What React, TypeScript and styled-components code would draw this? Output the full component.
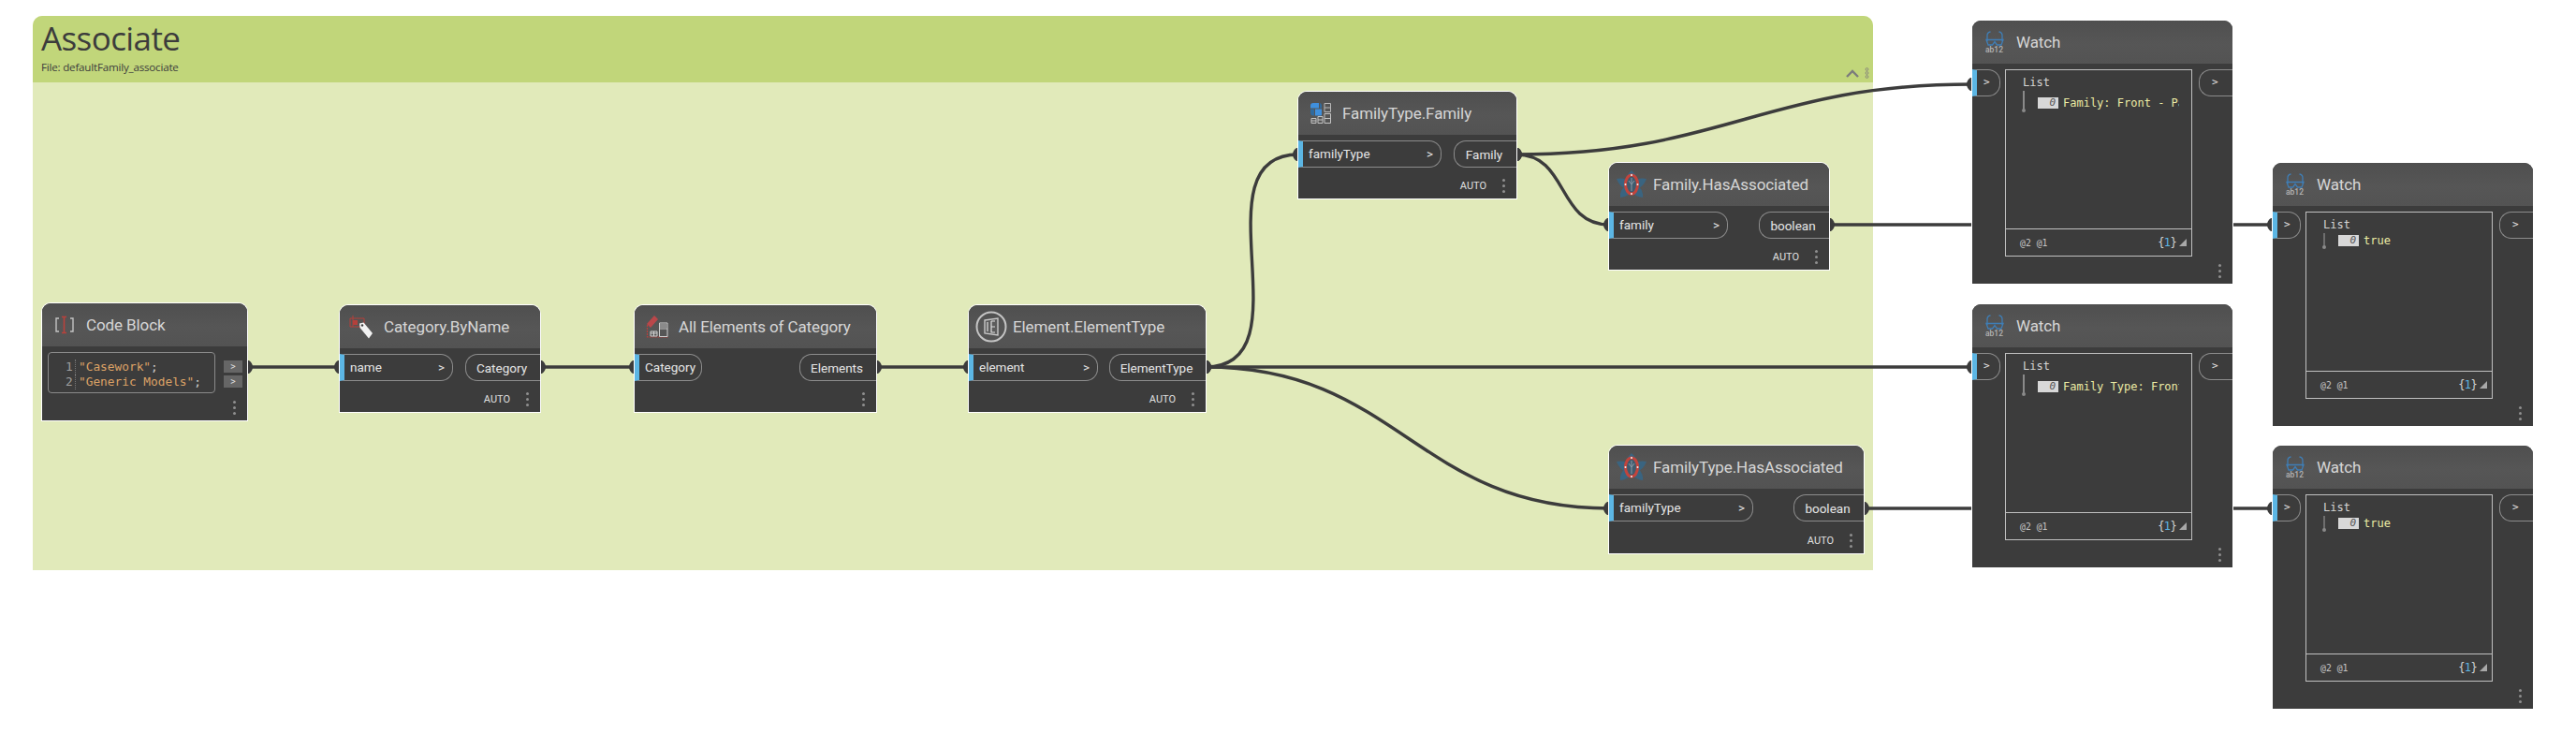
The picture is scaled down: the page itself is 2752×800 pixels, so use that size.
import React from 'react'
import styled, { createGlobalStyle } from 'styled-components'

const GlobalStyle = createGlobalStyle`
    html, body {
        margin: 0;
        background: #ffffff;
    }
    body {
        font-family: Roboto, "Liberation Sans", sans-serif;
    }
`

const Canvas = styled.div`
    position: relative;
    width: 2752px;
    height: 800px;
    overflow: hidden;
`

const Group = styled.div`
    position: absolute;
    left: 35px;
    top: 17px;
    width: 1966px;
    height: 592px;
    background: #e1eaba;
    border-radius: 10px 10px 0 0;
`
const GroupHeader = styled.div`
    position: relative;
    height: 71px;
    box-sizing: border-box;
    padding: 1px 9px 0;
    background: #c1d67a;
    border-radius: 10px 10px 0 0;
    color: #3c3c3c;
`
const GroupTitle = styled.div`
    font-family: "Open Sans", sans-serif;
    font-size: 35px;
    line-height: 46px;
    letter-spacing: -0.6px;
`
const GroupFile = styled.div`
    font-family: "Open Sans", sans-serif;
    font-size: 11.6px;
    line-height: 16px;
    letter-spacing: -0.2px;
`
const GroupControls = styled.div`
    position: absolute;
    right: 4px;
    bottom: 4px;
    display: flex;
    align-items: center;
    gap: 6px;
`

const WireLayer = styled.svg`
    position: absolute;
    left: 0;
    top: 0;
`

const Node = styled.div<{ $x: number; $y: number; $w: number; $h: number }>`
    position: absolute;
    left: ${p => p.$x}px;
    top: ${p => p.$y}px;
    width: ${p => p.$w}px;
    height: ${p => p.$h}px;
    display: flex;
    flex-direction: column;
    background: #3c3c3c;
    border-radius: 9px 9px 0 0;
    box-shadow: 0 0 0 1px #ffffff;
    color: #e6e6e6;
`
const NodeHeader = styled.div`
    flex: none;
    display: flex;
    align-items: center;
    height: 46px;
    background: linear-gradient(#4f4f4f, #565656 55%, #535353);
    border-radius: 9px 9px 0 0;
`
const IconSlot = styled.div`
    flex: none;
    width: 47px;
    height: 46px;
    display: flex;
    align-items: center;
    justify-content: center;
`
const NodeTitle = styled.div`
    font-size: 17px;
    letter-spacing: -0.1px;
    color: #d6d6d6;
    white-space: nowrap;
`
const PortRow = styled.div`
    flex: none;
    display: flex;
    justify-content: space-between;
    align-items: flex-start;
    margin-top: 6px;
`
const InPort = styled.div<{ $w: number }>`
    box-sizing: border-box;
    width: ${p => p.$w}px;
    height: 29px;
    display: flex;
    align-items: center;
    justify-content: space-between;
    padding: 0 8px 2px 6px;
    border: 1px solid #8c8c8c;
    border-left: 5px solid #5cb6e4;
    border-radius: 0 13px 13px 0;
    font-size: 13.5px;
    white-space: nowrap;
`
const OutPort = styled.div<{ $w: number }>`
    box-sizing: border-box;
    width: ${p => p.$w}px;
    height: 29px;
    display: flex;
    align-items: center;
    justify-content: center;
    padding-right: 3px;
    border: 1px solid #8c8c8c;
    border-right: none;
    border-radius: 13px 0 0 13px;
    font-size: 13.5px;
    white-space: nowrap;
`
const NodeFooter = styled.div`
    margin-top: auto;
    flex: none;
    height: 28px;
    display: flex;
    align-items: center;
    justify-content: flex-end;
    gap: 17px;
    padding-right: 12px;
`
const AutoLabel = styled.span`
    font-size: 11px;
    color: #e0e0e0;
`
const Dots = styled.div`
    width: 3px;
    height: 3px;
    border-radius: 50%;
    background: #8f8f8f;
    box-shadow: 0 -6px 0 #8f8f8f, 0 6px 0 #8f8f8f;
`

const CodeRow = styled.div`
    display: flex;
    align-items: flex-start;
    margin-top: 6px;
    padding-left: 6px;
`
const CodeBox = styled.div`
    box-sizing: border-box;
    width: 179px;
    height: 44px;
    padding: 7px 0 0 18px;
    border: 1px solid #8a8a8a;
    border-radius: 4px;
    font-family: "DejaVu Sans Mono", monospace;
    font-size: 12.8px;
    line-height: 16px;
`
const CodeLine = styled.div`
    display: flex;
`
const LineNumber = styled.span`
    width: 10px;
    margin-right: 3px;
    border-right: 1px dotted #777777;
    color: #a0a0a0;
`
const CodeString = styled.span`
    color: #dca266;
`
const CodeSemi = styled.span`
    color: #d0d0d0;
`
const CodeOutputs = styled.div`
    display: flex;
    flex-direction: column;
    gap: 3px;
    margin: 9px 0 0 9px;
`
const CodeOutput = styled.div`
    width: 20px;
    height: 13px;
    display: flex;
    align-items: center;
    justify-content: center;
    background: #666666;
    font-size: 11px;
    color: #dddddd;
`

const WatchRow = styled.div`
    display: flex;
    align-items: flex-start;
    margin-top: 6px;
`
const WatchIn = styled.div`
    box-sizing: border-box;
    flex: none;
    width: 30px;
    height: 29px;
    padding: 0 0 3px 7px;
    display: flex;
    align-items: center;
    border: 1px solid #8c8c8c;
    border-left: 5px solid #5cb6e4;
    border-radius: 0 13px 13px 0;
    font-family: "DejaVu Sans Mono", monospace;
    font-size: 11px;
`
const WatchOut = styled.div`
    box-sizing: border-box;
    flex: none;
    width: 36px;
    height: 29px;
    margin-left: 7px;
    padding: 0 0 3px 13px;
    display: flex;
    align-items: center;
    border: 1px solid #8c8c8c;
    border-right: none;
    border-radius: 13px 0 0 13px;
    font-family: "DejaVu Sans Mono", monospace;
    font-size: 11px;
`
const ListBox = styled.div`
    box-sizing: border-box;
    flex: none;
    width: 200px;
    height: 200px;
    margin-left: 5px;
    display: flex;
    flex-direction: column;
    border: 1px solid #c0c0c0;
    font-family: "DejaVu Sans Mono", monospace;
`
const ListBody = styled.div`
    flex: 1;
    padding: 6px 0 0 18px;
`
const ListLabel = styled.div`
    font-size: 12px;
    line-height: 14px;
    color: #d4d4d4;
`
const Tree = styled.div`
    display: flex;
    margin-top: 2px;
`
const Stem = styled.div<{ $tall: boolean }>`
    position: relative;
    flex: none;
    box-sizing: border-box;
    width: 2px;
    height: ${p => (p.$tall ? 21 : 15)}px;
    background: ${p => (p.$tall ? '#8a8a8a' : '#6e6e6e')};
    &:after {
        content: '';
        position: absolute;
        left: -1px;
        bottom: -2px;
        width: 4px;
        height: 4px;
        border-radius: 50%;
        background: #8a8a8a;
    }
`
const TreeItem = styled.div<{ $tall: boolean }>`
    display: flex;
    align-items: center;
    margin: ${p => (p.$tall ? 4 : 1)}px 0 0 14px;
`
const IndexBox = styled.div`
    flex: none;
    box-sizing: border-box;
    width: 22px;
    height: 12px;
    padding-right: 3px;
    background: #d8d8d8;
    color: #555555;
    font-size: 11px;
    line-height: 12px;
    font-style: italic;
    text-align: right;
`
const ValueText = styled.div`
    flex: none;
    width: 124px;
    margin-left: 5px;
    overflow: hidden;
    white-space: nowrap;
    font-size: 12px;
    line-height: 14px;
    color: #ebeba4;
`
const ListFooter = styled.div`
    flex: none;
    height: 29px;
    box-sizing: border-box;
    display: flex;
    align-items: center;
    justify-content: space-between;
    padding: 0 5px 0 15px;
    border-top: 1px solid #c0c0c0;
`
const Levels = styled.span`
    font-size: 9.8px;
    color: #c4c4c4;
`
const CountGroup = styled.div`
    display: flex;
    align-items: center;
    gap: 3px;
`
const Count = styled.span`
    font-size: 12px;
    letter-spacing: -0.6px;
    color: #d4d4d4;
    b {
        font-weight: 400;
        color: #5cb6e4;
    }
`
const Grip = styled.div`
    width: 8px;
    height: 8px;
    background: #a8a8a8;
    clip-path: polygon(100% 0, 100% 100%, 0 100%);
`

const CodeIcon = () => (
    <svg width="22" height="20" viewBox="0 0 22 20">
        <path d="M5 3H2V17H5M17 3H20V17H17" fill="none" stroke="#c4c4c4" strokeWidth="1.4" />
        <path d="M8 1.5H13M8 18.5H13M10.5 1.5V18.5" fill="none" stroke="#b8423c" strokeWidth="1.6" />
    </svg>
)

const CategoryIcon = () => (
    <svg width="28" height="28" viewBox="0 0 28 28">
        <path d="M4 2V14M1 5H16V14H1Z" fill="none" stroke="#b5403b" strokeWidth="1" />
        <rect x="4" y="7" width="5" height="5" fill="#b5403b" />
        <path d="M11 10.5L15.5 9.5L25 21L21 26.5L11.5 15Z" fill="#f2f2f2" />
        <circle cx="14" cy="12.5" r="1.2" fill="#3c3c3c" />
    </svg>
)

const ElementsIcon = () => (
    <svg width="26" height="26" viewBox="0 0 26 26">
        <path d="M2 10L10 1L14 5L6 14Z" fill="#b9474a" />
        <path d="M2.5 11V24H25" fill="none" stroke="#b9403c" strokeWidth="1.2" strokeDasharray="2 1" />
        <path d="M6 18H13V23H6ZM6 20H13M9.5 18V23" fill="none" stroke="#d0d0d0" strokeWidth="1" />
        <path d="M15.5 9H24V23.5H15.5ZM15.5 15H24" fill="none" stroke="#d0d0d0" strokeWidth="1" />
        <rect x="16" y="9.5" width="7.5" height="5.5" fill="#8a8a8a" />
    </svg>
)

const ElementTypeIcon = () => (
    <svg width="34" height="34" viewBox="0 0 34 34">
        <circle cx="17" cy="17" r="15.5" fill="none" stroke="#c4c4c4" strokeWidth="2" />
        <path d="M10 10L24 8V26L10 24Z" fill="#5c5c5c" stroke="#c8c8c8" strokeWidth="1.4" />
        <path d="M13 12V22M17 11V23M21 11H17M21 23H17V17H21" fill="none" stroke="#e0e0e0" strokeWidth="1.2" />
    </svg>
)

const FamilyIcon = () => (
    <svg width="24" height="24" viewBox="0 0 24 24">
        <path d="M4 1H10V6.5H1V4Q1 1 4 1ZM6 7.5H13V14Q13 14.5 10 14.5H6Z" fill="#3f8fdc" />
        <path d="M1 7.5H5V14.5H4Q1 14.5 1 11ZM11 1Q13 1.5 13 4V6.5H11Z" fill="#2f6a9e" />
        <path d="M16 1.5H22.5V10.5H16ZM16 6H22.5" fill="none" stroke="#b8b8b8" strokeWidth="1" />
        <path d="M2 17.5H7V22.5H2ZM2 20H7M9 15.5H14V22.5H9ZM9 19H14M16 12.5H22.5V22.5H16ZM16 17.5H22.5" fill="none" stroke="#c4c4c4" strokeWidth="1" />
    </svg>
)

const HasAssociatedIcon = () => (
    <svg width="32" height="30" viewBox="0 0 32 30">
        <g fill="#3a6480">
            <path d="M16 0Q23 6 22 14H10Q9 6 16 0Z" />
            <path d="M0 9Q10 7 16 14L10 20Q3 17 0 9Z" />
            <path d="M32 9Q22 7 16 14L22 20Q29 17 32 9Z" />
            <path d="M4 29Q3 20 12 14L17 22Q12 28 4 29Z" />
            <path d="M28 29Q29 20 20 14L15 22Q20 28 28 29Z" />
        </g>
        <ellipse cx="16" cy="15" rx="6.5" ry="10" fill="#3f5b6e" stroke="#c2443c" strokeWidth="3" />
        <path d="M16 8V22M13 11L16 15L19 11" fill="none" stroke="#8a9aa6" strokeWidth="1" />
        <g fill="#f4f4f4">
            <circle cx="16" cy="5" r="1" />
            <circle cx="16" cy="25" r="1" />
            <circle cx="9.5" cy="15" r="1" />
            <circle cx="22.5" cy="15" r="1" />
        </g>
    </svg>
)

const WatchIcon = () => (
    <svg width="22" height="24" viewBox="0 0 22 24">
        <path d="M3 11V5Q3 1.5 6.5 1M19 11V5Q19 1.5 15.5 1" fill="none" stroke="#3f7eb6" strokeWidth="1.3" />
        <path d="M2 9.5H20L18 15H13.5L11 11.5L8.5 15H4Z" fill="none" stroke="#3f7eb6" strokeWidth="1.3" />
        <text x="1" y="22.5" fontFamily="Roboto, sans-serif" fontSize="8.5" fontWeight="500" fill="#b4b4b4">ab12</text>
    </svg>
)

const CollapseIcon = () => (
    <svg width="14" height="9" viewBox="0 0 14 9">
        <path d="M1 8L7 2L13 8" fill="none" stroke="#7c7c7c" strokeWidth="2.4" />
    </svg>
)

const GroupMenuIcon = () => (
    <svg width="5" height="12" viewBox="0 0 5 12">
        <g fill="none" stroke="#8a8a7a" strokeWidth="1">
            <circle cx="2.5" cy="2" r="1.4" />
            <circle cx="2.5" cy="6" r="1.4" />
            <circle cx="2.5" cy="10" r="1.4" />
        </g>
    </svg>
)

type Wire = { x0: number; y0: number; x1: number; y1: number; startNub?: boolean }

const WIRES: Wire[] = [
    { x0: 264, y0: 392, x1: 363, y1: 392 },
    { x0: 577, y0: 392, x1: 678, y1: 392 },
    { x0: 936, y0: 392, x1: 1035, y1: 392 },
    { x0: 1288, y0: 392, x1: 1387, y1: 165 },
    { x0: 1288, y0: 392, x1: 2107, y1: 392 },
    { x0: 1288, y0: 392, x1: 1719, y1: 543 },
    { x0: 1620, y0: 165, x1: 2107, y1: 90 },
    { x0: 1620, y0: 165, x1: 1719, y1: 240 },
    { x0: 1954, y0: 240, x1: 2428, y1: 240 },
    { x0: 1991, y0: 543, x1: 2428, y1: 543 },
]

// control point reach grows with the wire length, so short steep wires bulge
const wirePath = ({ x0, y0, x1, y1 }: Wire) => {
    const reach = Math.hypot(x1 - x0, y1 - y0) * 0.45
    return `M${x0} ${y0}C${x0 + reach} ${y0} ${x1 - reach} ${y1} ${x1} ${y1}`
}

const outNub = (x: number, y: number) =>
    `M${x - 1} ${y - 7}L${x + 2} ${y - 7}Q${x + 6} ${y - 4} ${x + 6} ${y}Q${x + 6} ${y + 4} ${x + 2} ${y + 7}L${x - 1} ${y + 7}Z`
const inNub = (x: number, y: number) =>
    `M${x + 1} ${y - 7}L${x - 2} ${y - 7}Q${x - 6} ${y - 4} ${x - 6} ${y}Q${x - 6} ${y + 4} ${x - 2} ${y + 7}L${x + 1} ${y + 7}Z`

const Wires = () => (
    <WireLayer width="2752" height="800" viewBox="0 0 2752 800">
        {WIRES.map((w, i) => (
            <g key={i}>
                <path d={wirePath(w)} fill="none" stroke="#3c3c3c" strokeWidth="3.4" />
                {w.startNub !== false && <path d={outNub(w.x0, w.y0)} fill="#3c3c3c" />}
                <path d={inNub(w.x1, w.y1)} fill="#3c3c3c" />
            </g>
        ))}
    </WireLayer>
)

type DynNodeProps = {
    x: number
    y: number
    w: number
    h?: number
    title: string
    icon: React.ReactNode
    input: string
    inputWidth: number
    arrow?: boolean
    output: string
    outputWidth: number
    auto?: boolean
}

function DynNode({ x, y, w, h = 114, title, icon, input, inputWidth, arrow = true, output, outputWidth, auto = true }: DynNodeProps) {
    return (
        <Node $x={x} $y={y} $w={w} $h={h}>
            <NodeHeader>
                <IconSlot>{icon}</IconSlot>
                <NodeTitle>{title}</NodeTitle>
            </NodeHeader>
            <PortRow>
                <InPort $w={inputWidth}>
                    <span>{input}</span>
                    {arrow && <span>&gt;</span>}
                </InPort>
                <OutPort $w={outputWidth}>{output}</OutPort>
            </PortRow>
            <NodeFooter>
                {auto && <AutoLabel>AUTO</AutoLabel>}
                <Dots />
            </NodeFooter>
        </Node>
    )
}

function CodeBlockNode() {
    return (
        <Node $x={45} $y={324} $w={219} $h={125}>
            <NodeHeader>
                <IconSlot>
                    <CodeIcon />
                </IconSlot>
                <NodeTitle>Code Block</NodeTitle>
            </NodeHeader>
            <CodeRow>
                <CodeBox>
                    <CodeLine>
                        <LineNumber>1</LineNumber>
                        <CodeString>"Casework"</CodeString>
                        <CodeSemi>;</CodeSemi>
                    </CodeLine>
                    <CodeLine>
                        <LineNumber>2</LineNumber>
                        <CodeString>"Generic Models"</CodeString>
                        <CodeSemi>;</CodeSemi>
                    </CodeLine>
                </CodeBox>
                <CodeOutputs>
                    <CodeOutput>&gt;</CodeOutput>
                    <CodeOutput>&gt;</CodeOutput>
                </CodeOutputs>
            </CodeRow>
            <NodeFooter>
                <Dots />
            </NodeFooter>
        </Node>
    )
}

function WatchNode({ x, y, value, tall }: { x: number; y: number; value: string; tall: boolean }) {
    return (
        <Node $x={x} $y={y} $w={278} $h={281}>
            <NodeHeader>
                <IconSlot>
                    <WatchIcon />
                </IconSlot>
                <NodeTitle>Watch</NodeTitle>
            </NodeHeader>
            <WatchRow>
                <WatchIn>&gt;</WatchIn>
                <ListBox>
                    <ListBody>
                        <ListLabel>List</ListLabel>
                        <Tree>
                            <Stem $tall={tall} />
                            <TreeItem $tall={tall}>
                                <IndexBox>0</IndexBox>
                                <ValueText>{value}</ValueText>
                            </TreeItem>
                        </Tree>
                    </ListBody>
                    <ListFooter>
                        <Levels>@2 @1</Levels>
                        <CountGroup>
                            <Count>
                                {'{'}
                                <b>1</b>
                                {'}'}
                            </Count>
                            <Grip />
                        </CountGroup>
                    </ListFooter>
                </ListBox>
                <WatchOut>&gt;</WatchOut>
            </WatchRow>
            <NodeFooter>
                <Dots />
            </NodeFooter>
        </Node>
    )
}

export default function App() {
    return (
        <Canvas>
            <GlobalStyle />
            <Group>
                <GroupHeader>
                    <GroupTitle>Associate</GroupTitle>
                    <GroupFile>File: defaultFamily_associate</GroupFile>
                    <GroupControls>
                        <CollapseIcon />
                        <GroupMenuIcon />
                    </GroupControls>
                </GroupHeader>
            </Group>
            <Wires />
            <CodeBlockNode />
            <DynNode x={363} y={326} w={214} title="Category.ByName" icon={<CategoryIcon />} input="name" inputWidth={121} output="Category" outputWidth={80} />
            <DynNode x={678} y={326} w={258} title="All Elements of Category" icon={<ElementsIcon />} input="Category" inputWidth={72} arrow={false} output="Elements" outputWidth={82} auto={false} />
            <DynNode x={1035} y={326} w={253} title="Element.ElementType" icon={<ElementTypeIcon />} input="element" inputWidth={138} output="ElementType" outputWidth={103} />
            <DynNode x={1387} y={98} w={233} title="FamilyType.Family" icon={<FamilyIcon />} input="familyType" inputWidth={153} output="Family" outputWidth={67} />
            <DynNode x={1719} y={174} w={235} title="Family.HasAssociated" icon={<HasAssociatedIcon />} input="family" inputWidth={127} output="boolean" outputWidth={75} />
            <DynNode x={1719} y={476} w={272} h={115} title="FamilyType.HasAssociated" icon={<HasAssociatedIcon />} input="familyType" inputWidth={154} output="boolean" outputWidth={75} />
            <WatchNode x={2107} y={22} value="Family: Front - Pa" tall />
            <WatchNode x={2428} y={174} value="true" tall={false} />
            <WatchNode x={2107} y={325} value="Family Type: Front" tall />
            <WatchNode x={2428} y={476} value="true" tall={false} />
        </Canvas>
    )
}
